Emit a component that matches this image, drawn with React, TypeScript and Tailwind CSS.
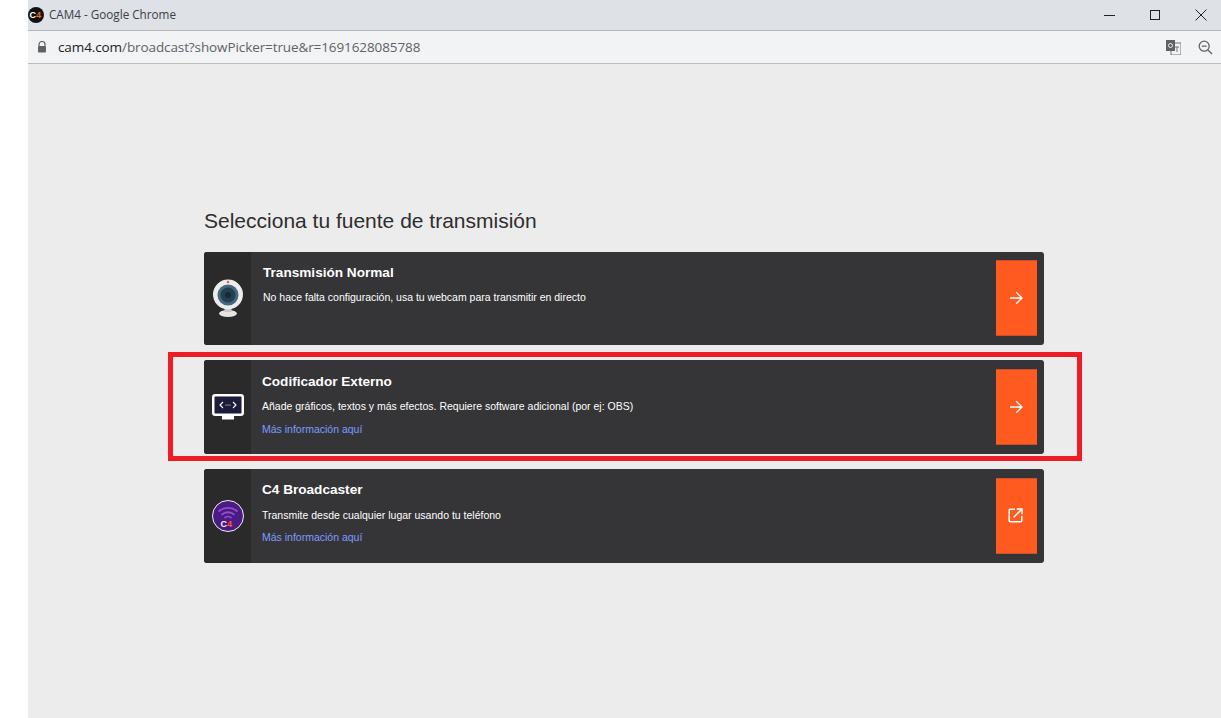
import React from "react";

const Arrow = () => (
  <svg width="14" height="14" viewBox="0 0 14 14" fill="none" stroke="#fff" strokeWidth="1.3" className="-translate-x-px">
    <path d="M1 7H13M7.2 1.2L13 7L7.2 12.8" />
  </svg>
);

const External = () => (
  <svg width="15" height="15" viewBox="0 0 15 15" fill="none" stroke="#fff" strokeWidth="1.5" className="-translate-x-px -translate-y-px">
    <path d="M7 1.2H2.2a1 1 0 0 0-1 1v10.6a1 1 0 0 0 1 1h10.6a1 1 0 0 0 1-1V8" />
    <path d="M5.5 9.5L13.6 1.4M8.8 1H14v5.2" />
  </svg>
);

const Webcam = () => (
  <svg width="32" height="40" viewBox="0 0 32 40">
    <ellipse cx="16" cy="34.5" rx="9" ry="3.5" fill="#e4e4e4" />
    <rect x="12.5" y="26" width="7" height="7" fill="#c9c9c9" />
    <ellipse cx="16" cy="15.5" rx="15" ry="15" fill="#ececec" />
    <circle cx="16" cy="16" r="10.5" fill="#47687a" />
    <circle cx="16" cy="16" r="7.5" fill="#24404f" />
    <circle cx="16" cy="16" r="3" fill="#16293a" />
    <circle cx="16" cy="3" r="1.3" fill="#e25c5c" />
  </svg>
);

const Monitor = () => (
  <svg width="32" height="26" viewBox="0 0 32 26">
    <rect x="1.25" y="1.25" width="29.5" height="19.5" rx="2" fill="#1d1b3a" stroke="#fff" strokeWidth="2.5" />
    <rect x="10" y="22" width="12" height="3.5" fill="#fff" />
    <path d="M11 8L8 11L11 14M21 8L24 11L21 14" fill="none" stroke="#fff" strokeWidth="1.1" />
    <circle cx="14" cy="11" r=".6" fill="#fff" />
    <circle cx="16" cy="11" r=".6" fill="#fff" />
    <circle cx="18" cy="11" r=".6" fill="#fff" />
  </svg>
);

const Purple = () => (
  <svg width="32" height="32" viewBox="0 0 32 32">
    <circle cx="16" cy="16" r="15.5" fill="#4a1a85" stroke="#f0f0f0" strokeWidth="1" />
    <g fill="none" stroke="#9050c8" strokeWidth="1.8">
      <path d="M6.5 11.5a14 14 0 0 1 19 0" />
      <path d="M9.5 14.8a9.5 9.5 0 0 1 13 0" />
      <path d="M12.5 18a5 5 0 0 1 7 0" />
    </g>
    <text x="8.5" y="27" fontSize="9" fontWeight="700" fontFamily="Liberation Sans" fill="#f2f2f2">C<tspan fill="#ff5a1f">4</tspan></text>
  </svg>
);

const Card = ({ icon, title, desc, link, action, h, body, descMt, linkMt, btn }: { icon: React.ReactNode; title: string; desc: string; link?: boolean; action: React.ReactNode; h: string; body: string; descMt: string; linkMt?: string; btn: string }) => (
  <div className={`flex ${h} w-[840px] rounded-[3px] bg-[#353537] overflow-hidden`}>
    <div className="w-[47px] shrink-0 bg-[#2a2a2a] flex items-center justify-center">{icon}</div>
    <div className={`flex-1 ${body}`}>
      <div className="text-[13.6px] leading-[18px] font-bold text-white">{title}</div>
      <div className={`${descMt} text-[10.5px] leading-[16px] text-white`}>{desc}</div>
      {link && <div className={`${linkMt} text-[10.5px] leading-[14px] text-[#7d9bff]`}>Más información aquí</div>}
    </div>
    <div className={`self-start ${btn} mr-[7px] w-[41px] h-[76px] bg-[#ff5a1f] border-y border-y-[#c9502a] flex items-center justify-center`}>{action}</div>
  </div>
);

export default function App() {
  return (
    <div className="flex w-[1221px] h-[718px] overflow-hidden bg-white font-['Liberation_Sans',Arial,sans-serif]">
      <div className="w-[28px] shrink-0 bg-white" />
      <div className="flex-1 flex flex-col min-w-0">
        <div className="h-[31px] shrink-0 bg-[#dee1e6] border-b border-b-[#b4b6b9] flex items-center">
          <svg width="16" height="16" viewBox="0 0 16 16" className="mr-[5px]">
            <circle cx="8" cy="8" r="8" fill="#111" />
            <text x="1.5" y="11" fontSize="9" fontWeight="700" fontFamily="Liberation Sans" fill="#fff">C<tspan fill="#f26522">4</tspan></text>
          </svg>
          <span className="text-[11.7px] text-[#3c4043] font-['Open_Sans',sans-serif]">CAM4 - Google Chrome</span>
          <div className="ml-auto flex items-center text-[#222]">
            <svg width="46" height="14" viewBox="0 0 46 14" fill="none" stroke="#222" strokeWidth="1"><path d="M21 7.5H32" /></svg>
            <svg width="46" height="14" viewBox="0 0 46 14" fill="none" stroke="#222" strokeWidth="1"><rect x="21.5" y="2.5" width="9" height="9" /></svg>
            <svg width="46" height="14" viewBox="0 0 46 14" fill="none" stroke="#222" strokeWidth="1"><path d="M20.5 1.5L31.5 12.5M31.5 1.5L20.5 12.5" /></svg>
          </div>
        </div>
        <div className="h-[33px] shrink-0 bg-[#f1f3f4] border-b border-b-[#b9bbbd] flex items-center">
          <svg width="10" height="12" viewBox="0 0 10 12" className="ml-[9px] mr-[11px]">
            <path d="M2 5V3.5a3 3 0 0 1 6 0V5" fill="none" stroke="#5f6368" strokeWidth="1.2" />
            <rect x="1" y="5" width="8" height="6.5" rx="1" fill="#5f6368" />
          </svg>
          <span className="text-[13.5px] text-[#202124] font-['Open_Sans',sans-serif] tracking-[-0.1px]">cam4.com<span className="text-[#5f6368]">/broadcast?showPicker=true&amp;r=1691628085788</span></span>
          <div className="ml-auto flex items-center mr-[8px] gap-[17px]">
            <svg width="15" height="15" viewBox="0 0 15 15">
              <rect x="5" y="3" width="10" height="12" fill="#f1f3f4" stroke="#70757a" />
              <rect x="0" y="0" width="9" height="11" fill="#5f6368" />
              <circle cx="4.5" cy="5.5" r="2" fill="none" stroke="#eee" />
              <path d="M9 7H13M11 7V12" stroke="#70757a" />
            </svg>
            <svg width="15" height="15" viewBox="0 0 15 15" fill="none" stroke="#5f6368" strokeWidth="1.3">
              <circle cx="6.2" cy="6.2" r="5" />
              <path d="M3.8 6.2H8.6M10 10L14 14" />
            </svg>
          </div>
        </div>
        <main className="flex-1 bg-[#ececec] pl-[176px] pt-[144px]">
          <h1 className="text-[21px] leading-[26px] text-[#2e2e2e] font-normal mb-[18px]">Selecciona tu fuente de transmisión</h1>
          <div className="flex flex-col gap-[15px]">
            <Card h="h-[93px]" body="pl-[12px] pt-[12px]" descMt="mt-[7px]" btn="mt-[8px]" icon={<Webcam />} title="Transmisión Normal" desc="No hace falta configuración, usa tu webcam para transmitir en directo" action={<Arrow />} />
            <div className="relative w-[840px]">
              <Card h="h-[94px]" body="pl-[11px] pt-[13px]" descMt="mt-[7px]" linkMt="mt-[8px]" btn="mt-[9px]" icon={<Monitor />} title="Codificador Externo" desc="Añade gráficos, textos y más efectos. Requiere software adicional (por ej: OBS)" link action={<Arrow />} />
              <div className="absolute left-[-36px] right-[-38px] top-[-8px] bottom-[-7px] border-[5px] border-[#ee1c25] pointer-events-none" />
            </div>
            <Card h="h-[94px]" body="pl-[11px] pt-[12px]" descMt="mt-[8px]" linkMt="mt-[7px]" btn="mt-[9px]" icon={<Purple />} title="C4 Broadcaster" desc="Transmite desde cualquier lugar usando tu teléfono" link action={<External />} />
          </div>
        </main>
      </div>
    </div>
  );
}
